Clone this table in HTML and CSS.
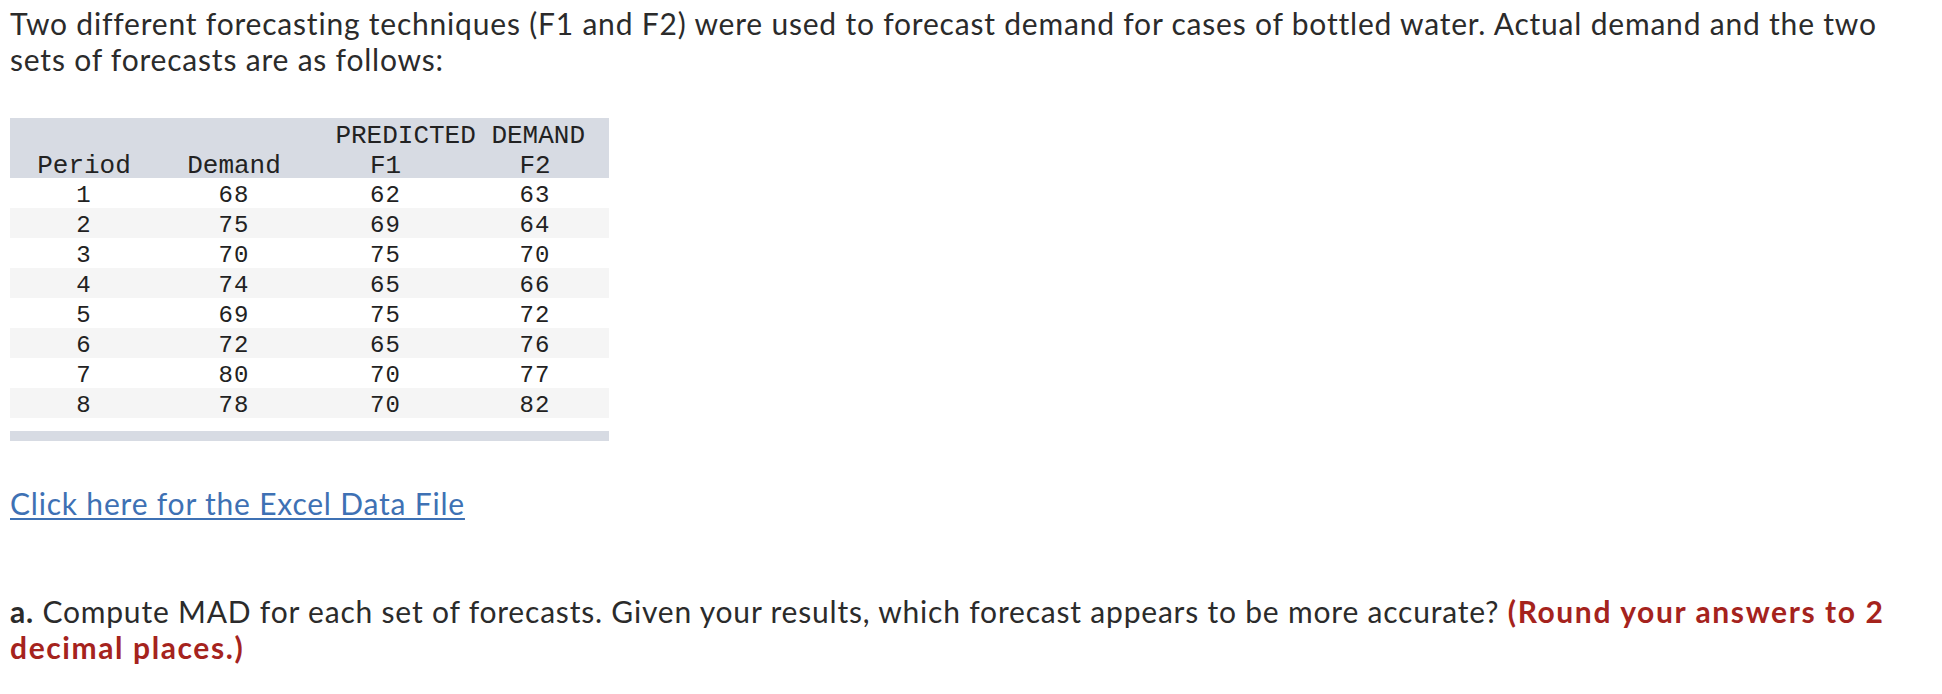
FILE: index.html
```html
<!DOCTYPE html>
<html>
<head>
<meta charset="utf-8">
<link rel="stylesheet" href="styles.css">
</head>
<body>
<div class="page">
  <p class="intro">Two different forecasting techniques (F1 and F2) were used to forecast demand for cases of bottled water. Actual demand and the two sets of forecasts are as follows:</p>

  <div class="data">
    <table class="grid">
      <colgroup>
        <col class="c1"><col class="c2"><col class="c3"><col class="c4">
      </colgroup>
      <thead>
        <tr class="hrow">
          <th></th><th></th><th colspan="2" class="span">PREDICTED DEMAND</th>
        </tr>
        <tr class="hrow">
          <th>Period</th><th>Demand</th><th>F1</th><th>F2</th>
        </tr>
      </thead>
      <tbody>
        <tr><td>1</td><td>68</td><td>62</td><td>63</td></tr>
        <tr><td>2</td><td>75</td><td>69</td><td>64</td></tr>
        <tr><td>3</td><td>70</td><td>75</td><td>70</td></tr>
        <tr><td>4</td><td>74</td><td>65</td><td>66</td></tr>
        <tr><td>5</td><td>69</td><td>75</td><td>72</td></tr>
        <tr><td>6</td><td>72</td><td>65</td><td>76</td></tr>
        <tr><td>7</td><td>80</td><td>70</td><td>77</td></tr>
        <tr><td>8</td><td>78</td><td>70</td><td>82</td></tr>
      </tbody>
    </table>
    <div class="footbar"></div>
  </div>

  <p class="linkline"><a class="xl" href="#">Click here for the Excel Data File</a></p>

  <p class="question"><b>a.</b> Compute MAD for each set of forecasts. Given your results, which forecast appears to be more accurate? <span class="hint">(Round your answers to 2 decimal places.)</span></p>
</div>
</body>
</html>
```

FILE: styles.css
```css
html, body {
  margin: 0;
  padding: 0;
  background: #ffffff;
}

.page {
  padding: 5px 10px 0 10px;
  font-family: "Lato", "Open Sans", sans-serif;
  font-size: 30px;
  line-height: 36px;
  letter-spacing: 0.8px;
  color: #2b2b2b;
}

.intro {
  margin: 0;
}

.data {
  margin-top: 41px;
  width: 599px;
}

.grid {
  width: 599px;
  border-collapse: collapse;
  table-layout: fixed;
  font-family: "Liberation Mono", "DejaVu Sans Mono", monospace;
  font-size: 24px;
  letter-spacing: 1px;
  color: #222222;
}

.c1 { width: 148px; }
.c2 { width: 152px; }
.c3 { width: 151px; }
.c4 { width: 148px; }

.grid th,
.grid td {
  height: 30px;
  box-sizing: border-box;
  padding: 6px 0 0 0;
  line-height: 24px;
  text-align: center;
  font-weight: normal;
  vertical-align: top;
  white-space: nowrap;
}

.grid th {
  font-size: 26px;
  letter-spacing: 0;
}

.hrow {
  background: #d7dbe3;
}

.grid th.span {
  text-align: right;
  padding-right: 24px;
}

.grid tbody tr:nth-child(even) {
  background: #f5f5f5;
}

.footbar {
  margin-top: 13px;
  height: 10px;
  background: #d7dbe3;
}

.linkline {
  margin: 44px 0 0 0;
}

.xl {
  color: #3e71b4;
  text-decoration: underline;
  text-decoration-thickness: 2px;
  text-underline-offset: 3px;
}

.question {
  margin: 72px 0 0 0;
}

.question b {
  font-weight: 700;
}

.hint {
  color: #a5231d;
  font-weight: 700;
  letter-spacing: 1.6px;
}
```
